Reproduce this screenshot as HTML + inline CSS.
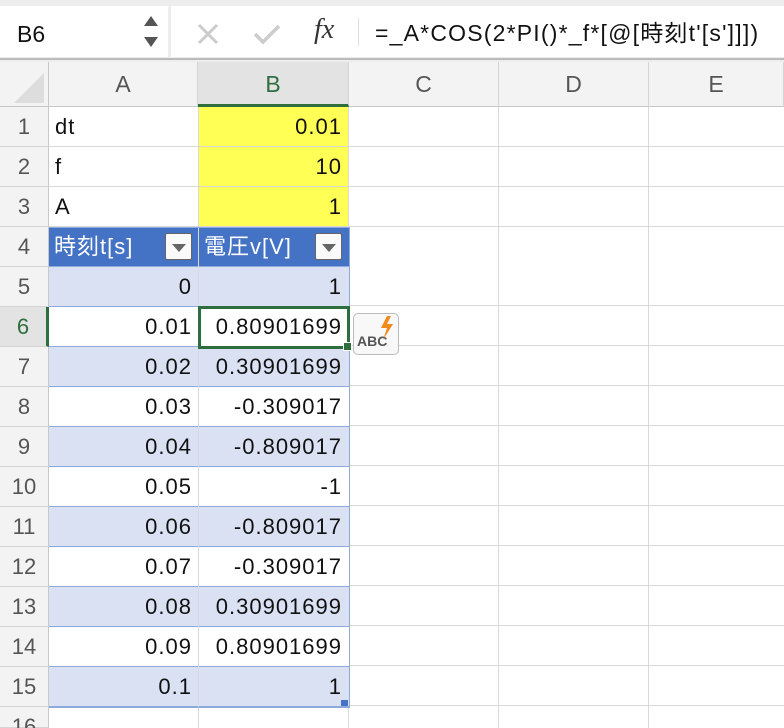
<!DOCTYPE html><html><head><meta charset="utf-8"><style>
html,body{margin:0;width:784px;height:728px;overflow:hidden}
body{background:#fff;font-family:"Liberation Sans","Noto Sans CJK JP",sans-serif;position:relative}
.a{position:absolute;box-sizing:border-box}
.t{font-size:22px;letter-spacing:1px;line-height:40px;color:#111;white-space:nowrap}
.r{text-align:right;padding-right:6px}
.l{padding-left:6px}
.rh{left:0;width:49px;height:40px;text-align:center;font-size:22px;color:#555;line-height:40px;background:#f3f3f3;border-bottom:1px solid #d4d4d4;border-right:1px solid #c8c8c8}
.ch{top:62px;height:45px;line-height:45px;text-align:center;font-size:23px;color:#555;background:#f3f3f3;border-right:1px solid #d4d4d4;border-bottom:1px solid #c8c8c8}
.hl{height:1px;background:#d9d9d9;left:49px;width:735px}
.vl{width:1px;background:#d9d9d9;top:107px;height:621px}
.dd{width:27px;height:27px;background:#fafafa;border:1px solid #666;border-radius:2px;top:6px}
.dd:after{content:"";position:absolute;left:6px;top:10px;border-left:7px solid transparent;border-right:7px solid transparent;border-top:8px solid #666}
</style></head><body>
<div class="a" style="left:0;top:0;width:784px;height:62px;background:#ededed"></div>
<div class="a" style="left:0;top:6px;width:168px;height:51px;background:#fff"></div>
<div class="a t" style="left:17px;top:14px;font-size:23px;letter-spacing:0">B6</div>
<div class="a" style="left:144px;top:16px;border-left:7px solid transparent;border-right:7px solid transparent;border-bottom:10px solid #555"></div>
<div class="a" style="left:144px;top:37px;border-left:7px solid transparent;border-right:7px solid transparent;border-top:10px solid #555"></div>
<div class="a" style="left:171px;top:6px;width:613px;height:51px;background:#fff"></div>
<svg class="a" style="left:196px;top:22px" width="24" height="24"><path d="M3 3L21 21M21 3L3 21" stroke="#ccc" stroke-width="3"/></svg>
<svg class="a" style="left:252px;top:22px" width="30" height="24"><path d="M3 12L11 20L27 4" stroke="#ccc" stroke-width="3.5" fill="none"/></svg>
<div class="a" style="left:314px;top:14px;font-size:28px;font-style:italic;font-family:'Liberation Serif',serif;color:#333">fx</div>
<div class="a" style="left:358px;top:18px;width:1px;height:28px;background:#ddd"></div>
<div class="a t" style="left:375px;top:13px;font-size:23px;letter-spacing:1.2px">=_A*COS(2*PI()*_f*[@[時刻t'[s']]])</div>
<div class="a" style="left:0;top:58px;width:784px;height:2px;background:#bbb"></div>
<div class="a" style="left:0;top:62px;width:49px;height:45px;background:#f3f3f3;border-right:1px solid #c8c8c8;border-bottom:1px solid #c8c8c8"></div>
<div class="a" style="left:14px;top:73px;width:30px;height:30px;background:#ddd;clip-path:polygon(100% 0,100% 100%,0 100%)"></div>
<div class="a ch" style="left:49px;width:149px">A</div>
<div class="a ch" style="left:198px;width:151px;color:#2e6e3e;background:#e3e3e3;border-bottom:3px solid #2e6e3e">B</div>
<div class="a ch" style="left:349px;width:150px">C</div>
<div class="a ch" style="left:499px;width:150px">D</div>
<div class="a ch" style="left:649px;width:135px">E</div>
<div class="a" style="left:198px;top:107px;width:151px;height:120px;background:#ffff55"></div>
<div class="a" style="left:49px;top:227px;width:300px;height:40px;background:#4472c4"></div>
<div class="a" style="left:49px;top:267px;width:300px;height:40px;background:#d9e1f2"></div>
<div class="a" style="left:49px;top:347px;width:300px;height:40px;background:#d9e1f2"></div>
<div class="a" style="left:49px;top:427px;width:300px;height:40px;background:#d9e1f2"></div>
<div class="a" style="left:49px;top:507px;width:300px;height:40px;background:#d9e1f2"></div>
<div class="a" style="left:49px;top:587px;width:300px;height:40px;background:#d9e1f2"></div>
<div class="a" style="left:49px;top:667px;width:300px;height:40px;background:#d9e1f2"></div>
<div class="a hl" style="top:146px"></div><div class="a hl" style="top:186px"></div><div class="a hl" style="top:226px"></div>
<div class="a hl" style="top:266px;background:#8ea9db"></div><div class="a hl" style="top:306px;background:#8ea9db"></div><div class="a hl" style="top:346px;background:#8ea9db"></div><div class="a hl" style="top:386px;background:#8ea9db"></div><div class="a hl" style="top:426px;background:#8ea9db"></div><div class="a hl" style="top:466px;background:#8ea9db"></div><div class="a hl" style="top:506px;background:#8ea9db"></div><div class="a hl" style="top:546px;background:#8ea9db"></div><div class="a hl" style="top:586px;background:#8ea9db"></div><div class="a hl" style="top:626px;background:#8ea9db"></div><div class="a hl" style="top:666px;background:#8ea9db"></div><div class="a hl" style="top:706px;background:#8ea9db"></div>
<div class="a" style="left:349px;top:266px;width:435px;height:441px;background:repeating-linear-gradient(#fff 0 39px,#d9d9d9 39px 40px)"></div>
<div class="a vl" style="left:198px"></div><div class="a vl" style="left:498px"></div><div class="a vl" style="left:648px"></div>
<div class="a vl" style="left:348px;top:107px;height:120px"></div><div class="a vl" style="left:348px;top:707px;height:21px"></div>
<div class="a" style="left:48px;top:227px;width:302px;height:481px;border:1px solid #8ea9db"></div>
<div class="a rh" style="top:107px">1</div><div class="a rh" style="top:147px">2</div><div class="a rh" style="top:187px">3</div><div class="a rh" style="top:227px">4</div><div class="a rh" style="top:267px">5</div><div class="a rh" style="top:307px;color:#2e6e3e;background:#e3e3e3;border-right:3px solid #2e6e3e">6</div><div class="a rh" style="top:347px">7</div><div class="a rh" style="top:387px">8</div><div class="a rh" style="top:427px">9</div><div class="a rh" style="top:467px">10</div><div class="a rh" style="top:507px">11</div><div class="a rh" style="top:547px">12</div><div class="a rh" style="top:587px">13</div><div class="a rh" style="top:627px">14</div><div class="a rh" style="top:667px">15</div><div class="a rh" style="top:707px;height:21px">16</div>
<div class="a t l" style="left:49px;top:107px">dt</div><div class="a t r" style="left:198px;width:150px;top:107px">0.01</div>
<div class="a t l" style="left:49px;top:147px">f</div><div class="a t r" style="left:198px;width:150px;top:147px">10</div>
<div class="a t l" style="left:49px;top:187px">A</div><div class="a t r" style="left:198px;width:150px;top:187px">1</div>
<div class="a t" style="left:54px;top:227px;color:#fff">時刻t[s]</div>
<div class="a t" style="left:204px;top:227px;color:#fff">電圧v[V]</div>
<div class="a dd" style="left:165px;top:233px"></div><div class="a dd" style="left:315px;top:233px"></div>
<div class="a t r" style="left:49px;width:149px;top:267px">0</div><div class="a t r" style="left:198px;width:150px;top:267px">1</div>
<div class="a t r" style="left:49px;width:149px;top:307px">0.01</div><div class="a t r" style="left:198px;width:150px;top:307px">0.80901699</div>
<div class="a t r" style="left:49px;width:149px;top:347px">0.02</div><div class="a t r" style="left:198px;width:150px;top:347px">0.30901699</div>
<div class="a t r" style="left:49px;width:149px;top:387px">0.03</div><div class="a t r" style="left:198px;width:150px;top:387px">-0.309017</div>
<div class="a t r" style="left:49px;width:149px;top:427px">0.04</div><div class="a t r" style="left:198px;width:150px;top:427px">-0.809017</div>
<div class="a t r" style="left:49px;width:149px;top:467px">0.05</div><div class="a t r" style="left:198px;width:150px;top:467px">-1</div>
<div class="a t r" style="left:49px;width:149px;top:507px">0.06</div><div class="a t r" style="left:198px;width:150px;top:507px">-0.809017</div>
<div class="a t r" style="left:49px;width:149px;top:547px">0.07</div><div class="a t r" style="left:198px;width:150px;top:547px">-0.309017</div>
<div class="a t r" style="left:49px;width:149px;top:587px">0.08</div><div class="a t r" style="left:198px;width:150px;top:587px">0.30901699</div>
<div class="a t r" style="left:49px;width:149px;top:627px">0.09</div><div class="a t r" style="left:198px;width:150px;top:627px">0.80901699</div>
<div class="a t r" style="left:49px;width:149px;top:667px">0.1</div><div class="a t r" style="left:198px;width:150px;top:667px">1</div>
<div class="a" style="left:341px;top:700px;width:7px;height:6px;background:#4472c4"></div>
<div class="a" style="left:198px;top:306px;width:152px;height:43px;border:3px solid #2e6e3e"></div>
<div class="a" style="left:343px;top:342px;width:9px;height:9px;background:#2e6e3e;border:1px solid #fff"></div>
<div class="a" style="left:353px;top:313px;width:46px;height:42px;background:#f8f8f8;border:1px solid #bbb;border-radius:5px"></div>
<div class="a" style="left:357px;top:333px;font-size:14px;font-weight:bold;color:#555">ABC</div>
<svg class="a" style="left:378px;top:315px" width="18" height="26"><path d="M9 1L3 13H9L5 25L15 9H9L13 1Z" fill="#f08a1a"/></svg>
</body></html>
